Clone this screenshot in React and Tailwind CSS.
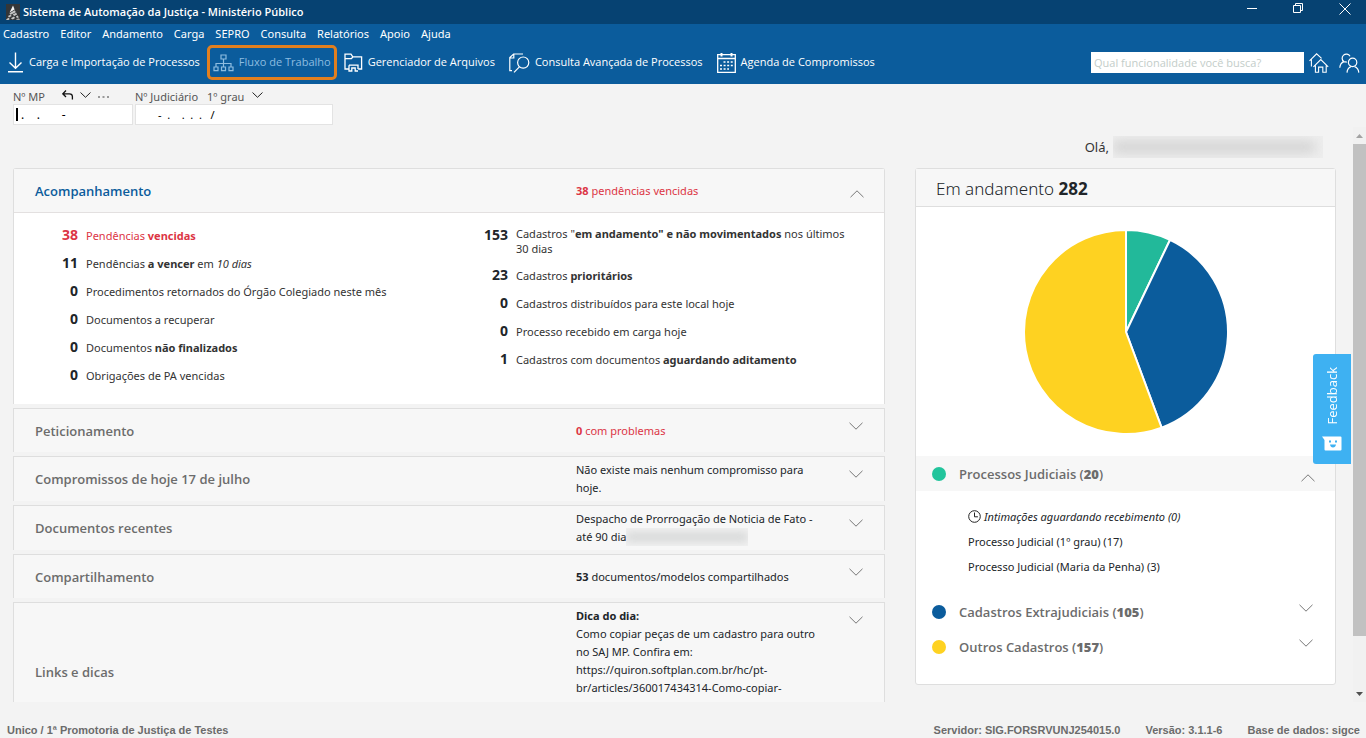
import React from "react";

const menuItems = [
	"Cadastro",
	"Editor",
	"Andamento",
	"Carga",
	"SEPRO",
	"Consulta",
	"Relatórios",
	"Apoio",
	"Ajuda",
];

const pendingLeft = [
	{ count: 38, danger: true, text: <>Pendências <b>vencidas</b></> },
	{ count: 11, text: <>Pendências <b>a vencer</b> em <i>10 dias</i></> },
	{ count: 0, text: "Procedimentos retornados do Órgão Colegiado neste mês" },
	{ count: 0, text: "Documentos a recuperar" },
	{ count: 0, text: <>Documentos <b>não finalizados</b></> },
	{ count: 0, text: "Obrigações de PA vencidas" },
];

const pendingRight = [
	{
		count: 153,
		text: <>Cadastros "<b>em andamento" e não movimentados</b> nos últimos 30 dias</>,
	},
	{ count: 23, text: <>Cadastros <b>prioritários</b></> },
	{ count: 0, text: "Cadastros distribuídos para este local hoje" },
	{ count: 0, text: "Processo recebido em carga hoje" },
	{ count: 1, text: <>Cadastros com documentos <b>aguardando aditamento</b></> },
];

const slices = [
	{ value: 20, color: "#22b99a" },
	{ value: 105, color: "#0b5c9c" },
	{ value: 157, color: "#fed221" },
];

const Chevron = ({ up }) => (
	<svg width="14" height="8" viewBox="0 0 14 8" fill="none" stroke="currentColor" aria-hidden="true">
		<path d={up ? "M0.5 7.2 7 0.8 13.5 7.2" : "M0.5 0.8 7 7.2 13.5 0.8"} />
	</svg>
);

const SmallChevron = () => (
	<svg width="11" height="6" viewBox="0 0 11 6" fill="none" stroke="#222" aria-hidden="true">
		<path d="M0.5 0.5 5.5 5.3 10.5 0.5" />
	</svg>
);

const LogoIcon = () => (
	<svg width="17" height="17" viewBox="0 0 17 17" aria-hidden="true">
		<path d="M2 0h14v16H2z" fill="#343638" />
		<path d="M9 1.5 5.6 8.6 10.6 5.4z" fill="#f2f2f2" />
		<path d="M5.4 9.2l5.4-3 1 2-5.2 2.6zM4 12l2.4-1.2 1.4 1.2-2.8 1.6zM8.6 10.6l3.6-1.8.9 1.8-2.9 1.4zM2.4 15.2l2-1.4 1.4 1.2-1.2 1H2.2zM6.8 14.2l3.2-1.6 1 1.4-2.2 1.6zM12 12.2l1.8-.8 1 2-2 .6zM12.2 15l2.8-.6 1 1.4h-3.4z" fill="#c4c4c4" />
	</svg>
);

const DownloadIcon = () => (
	<svg width="17" height="21" viewBox="0 0 17 21" fill="none" stroke="#fff" strokeWidth="1.4" aria-hidden="true">
		<path d="M8.5 0.5v15.5M2.5 10.5l6 5.8 6-5.8M1 19.8h15" />
	</svg>
);

const FlowIcon = () => (
	<svg width="21" height="18" viewBox="0 0 21 18" fill="none" stroke="currentColor" strokeWidth="1.2" aria-hidden="true">
		<path d="M8 1h5v4H8zM1 13h4v3.6H1zM8.5 13h4v3.6h-4zM16 13h4v3.6h-4zM10.5 5v8M3 13V9.5h15V13" />
	</svg>
);

const FolderIcon = () => (
	<svg width="19" height="19" viewBox="0 0 19 19" fill="none" stroke="#fff" strokeWidth="1.3" aria-hidden="true">
		<path d="M5 16H1V1.2h6l1.8 2.6h8.8V16h-3.4M1 5.6h6.4l1.6-1.8" />
		<path d="M5 12.2h9V16M5 12.2V18h2.8v-3h3.4v3H14" />
	</svg>
);

const SearchDocIcon = () => (
	<svg width="21" height="20" viewBox="0 0 21 20" fill="none" stroke="#fff" strokeWidth="1.2" aria-hidden="true">
		<path d="M3 17.6H.8V4.6L4.6 1H14M.8 5h4V1" />
		<circle cx="14.2" cy="9.6" r="5.6" />
		<path d="M10.4 13.8 5 19.4" />
	</svg>
);

const CalendarIcon = () => (
	<svg width="19" height="20" viewBox="0 0 19 20" fill="none" stroke="#fff" aria-hidden="true">
		<path d="M.7 1.7h17.6v17.6H.7zM.7 5.5h17.6" strokeWidth="1.3" />
		<path d="M4.5 0v3.4M14.5 0v3.4" strokeWidth="2" />
		<path d="M6.5 9h10M3 12.5h13.5M3 16h9" strokeWidth="1.4" strokeDasharray="2 1.6" />
	</svg>
);

const HomeIcon = () => (
	<svg width="20" height="20" viewBox="0 0 20 20" fill="none" stroke="#fff" strokeWidth="1.1" aria-hidden="true">
		<path d="M2.4 13.5V6.6M.5 7.8 7.6.8l5 4.6" />
		<path d="M4.4 13.8l7.4-7.2 7.4 7.2M6.4 12.4v6.9h3.2v-5.2h4.2v5.2h3.4v-6.9" />
	</svg>
);

const UsersIcon = () => (
	<svg width="21" height="20" viewBox="0 0 21 20" fill="none" stroke="#fff" strokeWidth="1.2" aria-hidden="true">
		<path d="M4.8 8.6A4.2 4.2 0 1 1 11 3.2M.8 14.8c.2-3 1.6-5.2 4-6.2l3 .6" />
		<circle cx="13.6" cy="9.4" r="4.2" />
		<path d="M8 19.6c.2-2.6 1.4-5 4-6M19.8 19.6c-.2-2.6-1.6-5-4.2-6" />
	</svg>
);

const TitleBar = () => (
	<header className="flex h-6 items-center justify-between bg-[#064272] pl-1 pr-[15px]">
		<div className="flex items-center gap-[2px]">
			<LogoIcon />
			<h1 className="text-[11px] font-semibold text-white">
				Sistema de Automação da Justiça - Ministério Público
			</h1>
		</div>
		<div className="flex items-center gap-[35px] self-start pt-[2px] text-white">
			<button aria-label="Minimizar">
				<svg width="11" height="13" viewBox="0 0 11 13" stroke="currentColor" aria-hidden="true">
					<path d="M0 6.5h10" />
				</svg>
			</button>
			<button aria-label="Restaurar">
				<svg width="11" height="13" viewBox="0 0 11 13" fill="none" stroke="currentColor" aria-hidden="true">
					<path d="M.5 3.5h7v7h-7zM2.5 3.5v-2h7v7h-2" />
				</svg>
			</button>
			<button aria-label="Fechar">
				<svg width="12" height="13" viewBox="0 0 12 13" stroke="currentColor" aria-hidden="true">
					<path d="M.5 1.5l11 11M11.5 1.5l-11 11" />
				</svg>
			</button>
		</div>
	</header>
);

const ToolButton = ({ icon, label }) => (
	<button className="flex items-center gap-[5px] whitespace-nowrap">
		{icon}
		<span>{label}</span>
	</button>
);

const Toolbar = () => (
	<div className="flex items-center justify-between pb-1 pl-[7px] pr-[6px] pt-px text-[11px] text-white">
		<div className="flex items-center gap-[14px]">
			<div className="flex items-center gap-[7px]">
				<ToolButton icon={<DownloadIcon />} label="Carga e Importação de Processos" />
				<div className="flex h-[35px] items-center rounded-[5px] border-[3px] border-[#e17f1f] px-[3px] text-[#8dbce0]">
					<ToolButton icon={<FlowIcon />} label="Fluxo de Trabalho" />
				</div>
				<ToolButton icon={<FolderIcon />} label="Gerenciador de Arquivos" />
			</div>
			<ToolButton icon={<SearchDocIcon />} label="Consulta Avançada de Processos" />
			<ToolButton icon={<CalendarIcon />} label="Agenda de Compromissos" />
		</div>
		<div className="flex items-center">
			<input
				type="text"
				aria-label="Buscar funcionalidade"
				placeholder="Qual funcionalidade você busca?"
				className="h-[21px] w-[213px] bg-white px-[3px] text-[11px] text-gray-700 outline-none placeholder:text-[#c3cdc9]"
			/>
			<button aria-label="Início" className="ml-[5px]">
				<HomeIcon />
			</button>
			<button aria-label="Usuários" className="ml-[10px]">
				<UsersIcon />
			</button>
		</div>
	</div>
);

const ProcessFields = () => (
	<div className="flex h-[43px] gap-[2px] pl-[13px] pt-[5px] text-[11px] text-[#555]">
		<div className="w-[120px]">
			<div className="flex h-[15px] items-center">
				<label htmlFor="numero-mp" className="w-[49px] pt-[2px]">Nº MP</label>
				<button aria-label="Desfazer" className="mr-[6px] pb-1">
					<svg width="12" height="10" viewBox="0 0 12 10" fill="none" stroke="#111" strokeWidth="1.3" aria-hidden="true">
						<path d="M4 .5.8 3.8 4 7M1 3.8h6.4c2.2 0 3 1 3 2.8v3" />
					</svg>
				</button>
				<button aria-label="Histórico" className="mr-[7px] pb-1">
					<SmallChevron />
				</button>
				<button aria-label="Mais opções">
					<svg width="12" height="2" viewBox="0 0 12 2" fill="#999" aria-hidden="true">
						<path d="M0 0h2v2H0zM4.5 0h2v2h-2zM9 0h2v2H9z" />
					</svg>
				</button>
			</div>
			<div className="flex h-[21px] items-center border border-[#e3e3e3] bg-white pl-[2px]">
				<span className="h-[13px] w-[2px] bg-black" />
				<input
					id="numero-mp"
					type="text"
					defaultValue=" .    .       -"
					className="min-w-0 flex-1 whitespace-pre text-[12px] text-black outline-none"
				/>
			</div>
		</div>
		<div className="w-[198px]">
			<div className="flex h-[15px] items-center">
				<label htmlFor="numero-judiciario" className="w-[72px] pt-[2px]">Nº Judiciário</label>
				<button className="flex items-center gap-[8px]">
					<span className="pt-[2px]">1º grau</span>
					<span className="pb-1"><SmallChevron /></span>
				</button>
			</div>
			<input
				id="numero-judiciario"
				type="text"
				defaultValue="       -  .    .  .  .   /"
				className="h-[21px] w-full border border-[#e3e3e3] bg-white px-[2px] text-[11px] text-black outline-none"
			/>
		</div>
	</div>
);

const PendingList = ({ items }) => (
	<ul className="flex flex-col gap-[10px]">
		{items.map((item, index) => (
			<li
				key={index}
				className={
					item.danger
						? "flex items-start gap-2 text-[#dc3545]"
						: "flex items-start gap-2 text-[#333]"
				}
			>
				<span
					className={
						item.danger
							? "w-16 shrink-0 text-right text-[14px] font-bold leading-[18px]"
							: "w-16 shrink-0 text-right text-[14px] font-bold leading-[18px] text-[#212529]"
					}
				>
					{item.count}
				</span>
				<span className="self-center text-[11px] leading-[15px]">{item.text}</span>
			</li>
		))}
	</ul>
);

const PanelRow = ({ title, tall, children }) => (
	<section
		className={
			tall
				? "flex min-h-[138px] shrink-0 items-center border border-b-0 border-[#dedede] bg-[#f7f7f7] py-1 pl-[21px] pr-[21px]"
				: "flex min-h-[44px] shrink-0 items-center border border-b-0 border-[#dedede] bg-[#f7f7f7] py-1 pl-[21px] pr-[21px]"
		}
	>
		<h2 className="flex-1 pt-[2px] font-['Open_Sans',sans-serif] text-[13px] font-semibold text-[#6c6c6c]">{title}</h2>
		<div
			className={
				tall
					? "w-[250px] self-start text-[11px] leading-[18px] text-[#212529]"
					: "w-[250px] text-[11px] leading-[18px] text-[#212529]"
			}
		>
			{children}
		</div>
		<button aria-label={`Expandir ${title}`} className="ml-[23px] self-start pt-[9px] text-[#777]">
			<Chevron />
		</button>
	</section>
);

const Accompaniment = () => (
	<section className="shrink-0 rounded-t-[3px] border border-b-0 border-[#dedede] bg-white">
		<div className="flex h-[44px] items-center border-b border-[#e3e0e0] bg-[#f7f7f7] pl-[21px] pr-5">
			<h2 className="flex-1 pt-[2px] font-['Open_Sans',sans-serif] text-[13px] font-semibold text-[#0b5c9c]">Acompanhamento</h2>
			<p className="w-[250px] pt-[2px] text-[11px] text-[#dc3545]">
				<b>38</b> pendências vencidas
			</p>
			<button aria-label="Recolher Acompanhamento" className="ml-6 pt-[6px] text-[#777]">
				<Chevron up />
			</button>
		</div>
		<div className="grid grid-cols-[430fr_440fr] pb-5 pt-[13px]">
			<PendingList items={pendingLeft} />
			<div className="pr-8">
				<PendingList items={pendingRight} />
			</div>
		</div>
	</section>
);

const PieChart = () => {
	const total = slices.reduce((sum, slice) => sum + slice.value, 0);
	const point = (value) => {
		const angle = (value / total) * Math.PI * 2;
		return `${103 + 102 * Math.sin(angle)} ${103 - 102 * Math.cos(angle)}`;
	};
	let start = 0;

	return (
		<svg width="206" height="206" viewBox="0 0 206 206" role="img" aria-label="Em andamento" className="mx-auto">
			{slices.map((slice) => {
				const from = start;
				start += slice.value;
				const large = slice.value > total / 2 ? 1 : 0;
				return (
					<path
						key={slice.color}
						d={`M103 103 L${point(from)} A102 102 0 ${large} 1 ${point(start)} Z`}
						fill={slice.color}
						stroke="#fff"
						strokeWidth="2"
					/>
				);
			})}
		</svg>
	);
};

const CategoryRow = ({ dot, title, count, open }) => (
	<div
		className={
			open
				? "flex h-[35px] items-center bg-[#f7f7f7] pl-4 pr-5"
				: "flex h-[35px] items-center pl-4 pr-[22px]"
		}
	>
		<span className={dot} />
		<h3 className="ml-[13px] flex-1 pt-[2px] font-['Open_Sans',sans-serif] text-[13px] font-semibold text-[#6c6c6c]">
			{title} (<b>{count}</b>)
		</h3>
		<button
			aria-label={open ? `Recolher ${title}` : `Expandir ${title}`}
			className={open ? "pt-[8px] text-[#777]" : "pb-[8px] text-[#777]"}
		>
			<Chevron up={open} />
		</button>
	</div>
);

const InProgress = () => (
	<section className="rounded-[3px] border border-[#dedede] bg-white">
		<h2 className="flex h-[38px] items-center whitespace-pre border-b border-[#dedede] bg-[#f7f7f7] pl-5 pt-[2px] text-[17px] font-light text-[#212529]">
			Em andamento <b className="font-bold">282</b>
		</h2>
		<div className="pb-[21px] pt-[22px]">
			<PieChart />
		</div>
		<CategoryRow
			dot="size-[14px] rounded-full bg-[#22c49c]"
			title="Processos Judiciais"
			count={20}
			open
		/>
		<ul className="pb-[15px] pl-[52px] pt-[13px] text-[11px] leading-[25px] text-[#212529]">
			<li className="flex items-center gap-[3px] italic">
				<svg width="13" height="13" viewBox="0 0 13 13" fill="none" stroke="#222" aria-hidden="true">
					<circle cx="6.5" cy="6.5" r="5.8" />
					<path d="M6.5 2.5v4.3h3.4" />
				</svg>
				Intimações aguardando recebimento (0)
			</li>
			<li>Processo Judicial (1º grau) (17)</li>
			<li>Processo Judicial (Maria da Penha) (3)</li>
		</ul>
		<CategoryRow
			dot="size-[14px] rounded-full bg-[#0b5c9c]"
			title="Cadastros Extrajudiciais"
			count={105}
		/>
		<CategoryRow
			dot="size-[14px] rounded-full bg-[#fed221]"
			title="Outros Cadastros"
			count={157}
		/>
		<div className="h-5" />
	</section>
);

const ScrollBar = () => (
	<div className="flex w-[13px] shrink-0 flex-col items-center bg-[#f1f1f1]" aria-hidden="true">
		<div className="flex h-[17px] items-center">
			<svg width="7" height="4" viewBox="0 0 7 4" fill="#a3a3a3">
				<path d="M0 4h7L3.5 0z" />
			</svg>
		</div>
		<div className="flex w-full flex-1 flex-col">
			<div className="h-[91%] bg-[#c1c1c1]" />
		</div>
		<div className="flex h-[17px] items-center">
			<svg width="7" height="4" viewBox="0 0 7 4" fill="#505050">
				<path d="M0 0h7L3.5 4z" />
			</svg>
		</div>
	</div>
);

const FeedbackTab = () => (
	<button className="absolute right-[15px] top-[227px] flex h-[110px] w-[38px] flex-col items-center justify-end gap-[12px] rounded-l-[3px] bg-[#3eb1f2] pb-[13px] text-white">
		<span className="rotate-180 font-['Open_Sans',sans-serif] text-[13px] leading-[16px] [writing-mode:vertical-rl]">Feedback</span>
		<svg width="20" height="15" viewBox="0 0 20 15" aria-hidden="true">
			<path d="M0 .5h18.5q1 0 1 1v12q0 1-1 1h-15q-1 0-1-1V4z" fill="#fff" />
			<path d="M7 4.5h2v2H7zM13 4.5h2v2h-2zM8 8.5h6q-.5 3-3 3t-3-3z" fill="#3eb1f2" />
		</svg>
	</button>
);

const App = () => {
	return (
		<div className="flex h-screen flex-col overflow-hidden bg-[#f3f3f3] font-['Noto_Sans',sans-serif]">
			<div className="bg-[#0b5c9c] font-['Open_Sans',sans-serif]">
				<TitleBar />
				<nav className="flex h-5 items-center gap-[11px] pl-[3px] font-['Noto_Sans',sans-serif] text-[11px] text-white">
					{menuItems.map((item) => (
						<a key={item} href="#">{item}</a>
					))}
				</nav>
				<Toolbar />
			</div>
			<ProcessFields />
			<div className="relative flex min-h-0 flex-1">
				<main className="flex min-w-0 flex-1 flex-col overflow-hidden pl-[13px] pr-[17px]">
					<div className="flex h-[41px] shrink-0 items-start justify-end gap-1 pr-[13px] pt-[9px] text-[13px] leading-[22px] text-[#333]">
						<span>Olá,</span>
						<div className="flex h-[22px] w-[210px] items-center overflow-hidden bg-[#eeeeee] pr-2">
							<div className="h-[10px] w-full bg-[#cfcfcf] blur-[6px]" />
						</div>
					</div>
					<div className="grid min-h-0 flex-1 grid-cols-[872fr_421fr] gap-[30px]">
						<div className="flex min-h-0 flex-col gap-1 overflow-hidden">
							<Accompaniment />
							<PanelRow title="Peticionamento">
								<p className="text-[#dc3545]"><b>0</b> com problemas</p>
							</PanelRow>
							<PanelRow title="Compromissos de hoje 17 de julho">
								<p>Não existe mais nenhum compromisso para hoje.</p>
							</PanelRow>
							<PanelRow title="Documentos recentes">
								<p>Despacho de Prorrogação de Noticia de Fato -</p>
								<p className="flex">
									até 90 dia
									<span className="flex h-[18px] w-[122px] items-center overflow-hidden bg-[#f2f2f2]">
										<span className="h-2 w-full bg-[#d0d2d2] blur-[5px]" />
									</span>
								</p>
							</PanelRow>
							<PanelRow title="Compartilhamento">
								<p><b>53</b> documentos/modelos compartilhados</p>
							</PanelRow>
							<PanelRow title="Links e dicas" tall>
								<p className="font-bold">Dica do dia:</p>
								<p>
									Como copiar peças de um cadastro para outro no SAJ MP. Confira em:
									https://quiron.softplan.com.br/hc/pt-br/articles/360017434314-Como-copiar-
								</p>
							</PanelRow>
						</div>
						<div>
							<InProgress />
						</div>
					</div>
				</main>
				<ScrollBar />
				<FeedbackTab />
			</div>
			<footer className="flex h-9 shrink-0 items-end justify-between pb-[1px] pl-[7px] pr-[6px] font-['Liberation_Sans',sans-serif] text-[11px] font-bold leading-[13px] text-[#6b6b6b]">
				<span>Unico / 1ª Promotoria de Justiça de Testes</span>
				<div className="flex gap-[25px]">
					<span>Servidor: SIG.FORSRVUNJ254015.0</span>
					<span>Versão: 3.1.1-6</span>
					<span>Base de dados: sigce</span>
				</div>
			</footer>
		</div>
	);
};

export default App;
